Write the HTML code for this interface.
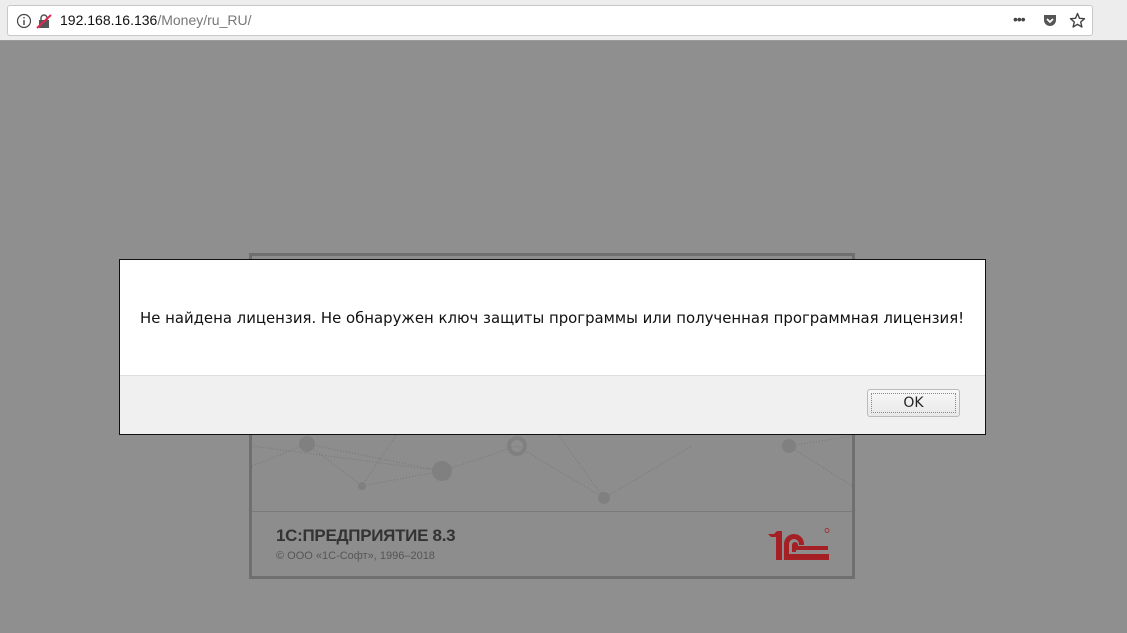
<!DOCTYPE html>
<html><head><meta charset="utf-8"><style>
*{margin:0;padding:0;box-sizing:border-box}
body{width:1127px;height:633px;overflow:hidden;background:#8f8f8f;font-family:"Liberation Sans","DejaVu Sans",sans-serif;position:relative}
#bar{position:absolute;left:0;top:0;width:1127px;height:41px;background:#ededed;border-bottom:1px solid #9a9a9a}
#url{position:absolute;left:7px;top:5px;width:1086px;height:31px;background:#fff;border:1px solid #c8c8c8;border-radius:3px}
#url .t{position:absolute;left:52px;top:6px;font-size:14px;color:#111}
#url .t span{color:#777}
#splash{position:absolute;left:249px;top:253px;width:606px;height:326px;border:3px solid #6f6f6f;background:#8d8d8d}
#sfoot{position:absolute;left:0;top:255px;width:600px;height:1px;background:#7a7a7a}
#title{position:absolute;left:24px;top:270px;font-size:17px;font-weight:bold;color:#333;letter-spacing:-0.3px}
#copy{position:absolute;left:24px;top:294px;font-size:11px;color:#555}
#dlg{position:absolute;left:119px;top:259px;width:867px;height:176px;border:1px solid #111;background:#f0f0f0}
#dlg .top{height:116px;background:#fff;border-bottom:1px solid #ddd}
#msg{position:absolute;left:20px;top:49px;font-family:"DejaVu Sans",sans-serif;font-size:14.9px;color:#111;white-space:nowrap}
#ok{position:absolute;left:747px;top:129px;width:93px;height:28px;border:1px solid #bbb;border-radius:3px;background:linear-gradient(#f8f8f8,#e8e8e8);font-family:"DejaVu Sans",sans-serif;font-size:14px;color:#222;text-align:center;line-height:26px}
#ok i{position:absolute;left:3px;top:3px;right:3px;bottom:3px;border:1px dotted #888}
</style></head><body>
<div id="bar"><div id="url">
<svg style="position:absolute;left:8px;top:7px" width="16" height="16" viewBox="0 0 16 16"><circle cx="8" cy="8" r="6.5" fill="none" stroke="#444" stroke-width="1.2"/><rect x="7.3" y="7" width="1.4" height="5" fill="#444"/><rect x="7.3" y="4" width="1.4" height="1.5" fill="#444"/></svg>
<svg style="position:absolute;left:28px;top:7px" width="16" height="16" viewBox="0 0 16 16"><rect x="3" y="7" width="10" height="8" fill="#555"/><path d="M5 7V5a3 3 0 0 1 6 0v2" fill="none" stroke="#555" stroke-width="1.5"/><path d="M1 15L15 2" stroke="#e22850" stroke-width="2"/></svg>
<div class="t">192.168.16.136<span>/Money/ru_RU/</span></div>
<div style="position:absolute;left:1005px;top:5px;font-size:14px;color:#444;letter-spacing:-1px">•••</div>
<svg style="position:absolute;left:1034px;top:7px" width="16" height="16" viewBox="0 0 16 16"><path d="M2 2h12v5a6 6 0 0 1-12 0z" fill="#555"/><path d="M5 6l3 3 3-3" fill="none" stroke="#fff" stroke-width="1.8"/></svg>
<svg style="position:absolute;left:1061px;top:6px" width="17" height="17" viewBox="0 0 17 17"><path d="M8.5 1.5l2 4.8 5 .4-3.8 3.3 1.2 5-4.4-2.7-4.4 2.7 1.2-5L1.5 6.7l5-.4z" fill="none" stroke="#444" stroke-width="1.4" stroke-linejoin="round"/></svg>
</div></div>
<div id="splash">
<svg style="position:absolute;left:0;top:170px" width="600" height="85"><g stroke="#777" stroke-dasharray="1 2" fill="none"><path d="M0 40L55 18L190 45L265 20L352 72L440 20M55 18L110 60L190 45M190 45L0 20M600 60L537 20L600 10M352 72L300 0M110 60L150 0"/></g><g fill="#808080"><circle cx="55" cy="18" r="8"/><circle cx="190" cy="45" r="10"/><circle cx="110" cy="60" r="4"/><circle cx="352" cy="72" r="6"/><circle cx="537" cy="20" r="7"/></g><circle cx="265" cy="20" r="8" fill="none" stroke="#808080" stroke-width="4"/></svg>
<div id="sfoot"></div>
<div id="title">1С:ПРЕДПРИЯТИЕ 8.3</div>
<div id="copy">© ООО «1С-Софт», 1996–2018</div>
<svg style="position:absolute;left:516px;top:272px" width="64" height="36" viewBox="0 0 64 36"><g fill="#a52024"><path d="M0 6h6l3-3h5v29h-6V9H3z"/><path d="M16 30V16a10 10 0 0 1 20 0v1h-5v-1a5 5 0 0 0-10 0v10h40v6H16z"/><path d="M24 24v-7a3 3 0 0 1 6 0v1h30v4H28v-5h0v7z"/></g><circle cx="59" cy="2.5" r="2" fill="none" stroke="#a52024" stroke-width="0.8"/></svg>
</div>
<div id="dlg"><div class="top"></div>
<div id="msg">Не найдена лицензия. Не обнаружен ключ защиты программы или полученная программная лицензия!</div>
<div id="ok"><i></i>OK</div>
</div>
</body></html>
